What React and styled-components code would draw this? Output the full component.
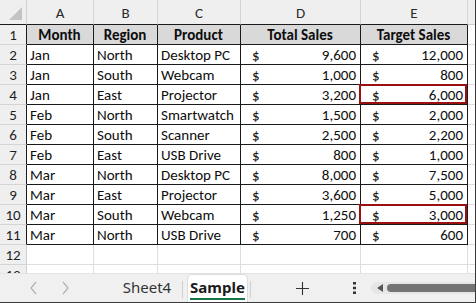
import React from "react";
import styled, { createGlobalStyle } from "styled-components";

const GlobalStyle = createGlobalStyle`
    html, body {
        margin: 0;
        padding: 0;
        background: #ffffff;
    }
    * {
        box-sizing: border-box;
    }
`;

const COLS = [
    { key: "A", width: 67 },
    { key: "B", width: 64 },
    { key: "C", width: 83 },
    { key: "D", width: 120 },
    { key: "E", width: 107 },
];

const rows = [
    ["Jan", "North", "Desktop PC", "9,600", "12,000"],
    ["Jan", "South", "Webcam", "1,000", "800"],
    ["Jan", "East", "Projector", "3,200", "6,000", true],
    ["Feb", "North", "Smartwatch", "1,500", "2,000"],
    ["Feb", "South", "Scanner", "2,500", "2,200"],
    ["Feb", "East", "USB Drive", "800", "1,000"],
    ["Mar", "North", "Desktop PC", "8,000", "7,500"],
    ["Mar", "East", "Projector", "3,600", "5,000"],
    ["Mar", "South", "Webcam", "1,250", "3,000", true],
    ["Mar", "North", "USB Drive", "700", "600"],
];

// --- Estrutura ---
const Window = styled.div`
    width: 476px;
    height: 303px;
    display: flex;
    flex-direction: column;
    overflow: hidden;
    border-right: 1px solid #3a3a3a;
    border-bottom: 1px solid #3a3a3a;
    font-family: Carlito, Lato, "Liberation Sans", sans-serif;
    color: #0d0d0d;
`;

const Sheet = styled.div`
    height: 273px;
    display: grid;
    grid-template-columns: 27px ${COLS.map((c) => c.width + "px").join(" ")} 1fr;
    grid-auto-rows: 20px;
    grid-template-rows: 25px;
    overflow: hidden;
`;

const Corner = styled.div`
    position: relative;
    background: #efefef;
    border-right: 1px solid #cfcfcf;
    border-bottom: 1px solid #1a1a1a;

    &::after {
        content: "";
        position: absolute;
        right: 4px;
        bottom: 4px;
        width: 0;
        height: 0;
        border-left: 13px solid transparent;
        border-bottom: 13px solid #c4c4c4;
    }
`;

const ColHead = styled.div`
    background: #efefef;
    border-right: 1px solid ${({ $edge }) => ($edge ? "#b8b8b8" : "#d4d4d4")};
    border-bottom: 1px solid ${({ $dark }) => ($dark ? "#1a1a1a" : "#cfcfcf")};
    display: flex;
    align-items: center;
    justify-content: center;
    font-size: 15px;
    color: #2b2b2b;
    padding-top: 1px;
`;

const RowHead = styled.div`
    background: #efefef;
    border-right: 1px solid ${({ $dark }) => ($dark ? "#1a1a1a" : "#cfcfcf")};
    border-bottom: 1px solid #d4d4d4;
    display: flex;
    align-items: center;
    justify-content: center;
    font-size: 15px;
    color: #1f1f1f;
    padding-top: 1px;
`;

const Cell = styled.div`
    position: relative;
    background: ${({ $head }) => ($head ? "#d9d9d9" : "#fff")};
    border-right: 1px solid ${({ $dark }) => ($dark ? "#1a1a1a" : "#dedede")};
    border-bottom: 1px solid ${({ $dark }) => ($dark ? "#1a1a1a" : "#dedede")};
    display: flex;
    align-items: center;
    justify-content: ${({ $center }) => ($center ? "center" : "space-between")};
    padding: 1px 4px 0 3px;
    font-size: 15px;
    font-weight: ${({ $head }) => ($head ? 800 : 400)};
    white-space: nowrap;
    overflow: visible;
`;

const Money = styled(Cell)`
    padding-left: 11px;
`;

const Highlight = styled.div`
    position: absolute;
    left: -2px;
    top: -1px;
    right: 0;
    bottom: 0;
    border: 2px solid #9b1010;
    pointer-events: none;
`;

const TabBar = styled.div`
    flex: 1;
    display: flex;
    align-items: stretch;
    background: #f0f0f0;
    border-top: 1px solid #e2e2e2;
    padding-left: 17px;
`;

const NavArrow = styled.div`
    width: 32px;
    display: flex;
    align-items: center;
    justify-content: center;
    color: #b0b0b0;
`;

const Tab = styled.div`
    position: relative;
    display: flex;
    align-items: center;
    justify-content: center;
    width: ${({ $w }) => $w}px;
    padding-left: ${({ $pl }) => $pl || 0}px;
    font-size: 15px;
    font-family: "Segoe UI", "Noto Sans", "Open Sans", sans-serif;
    background: ${({ $active }) => ($active ? "#fff" : "transparent")};
    border-radius: ${({ $active }) => ($active ? "5px 5px 0 0" : "0")};
    border: ${({ $active }) => ($active ? "1px solid #dcdcdc" : "none")};
    border-bottom: none;
    font-weight: ${({ $active }) => ($active ? 700 : 400)};
    color: ${({ $active }) => ($active ? "#1b1b1b" : "#333")};
    padding-bottom: 2px;
`;

const TabLabel = styled.span`
    position: relative;
    padding-bottom: 1px;
    border-bottom: ${({ $active }) => ($active ? "2px solid #157347" : "2px solid transparent")};
    margin-top: 2px;
`;

const Divider = styled.div`
    width: 1px;
    margin: 7px 4px 4px 2px;
    background: #cfcfcf;
`;

const IconButton = styled.div`
    width: ${({ $w }) => $w}px;
    display: flex;
    align-items: center;
    justify-content: center;
    color: #333;
`;

const Scroll = styled.div`
    flex: 1;
    display: flex;
    align-items: center;
    gap: 4px;
    margin: 8px 0 8px 12px;
    padding-left: 6px;
    background: #e6e6e6;
    border-radius: 6px 0 0 6px;
`;

const Thumb = styled.div`
    flex: 1;
    height: 8px;
    background: #737373;
    border-radius: 4px 0 0 4px;
`;

const Chevron = ({ dir }) => (
    <svg width="9" height="14" viewBox="0 0 9 14">
        <path
            d={dir === "left" ? "M7 1 L2 7 L7 13" : "M2 1 L7 7 L2 13"}
            fill="none"
            stroke="currentColor"
            strokeWidth="1.2"
        />
    </svg>
);

const App = () => {
    return (
        <>
            <GlobalStyle />
            <Window>
                <Sheet>
                    <Corner />
                    {COLS.map((c) => (
                        <ColHead key={c.key} $dark>
                            {c.key}
                        </ColHead>
                    ))}
                    <ColHead $edge />

                    <RowHead $dark>1</RowHead>
                    <Cell $head $dark $center>Month</Cell>
                    <Cell $head $dark $center>Region</Cell>
                    <Cell $head $dark $center>Product</Cell>
                    <Cell $head $dark $center>Total Sales</Cell>
                    <Cell $head $dark $center>Target Sales</Cell>
                    <Cell />

                    {rows.map((r, i) => (
                        <React.Fragment key={i}>
                            <RowHead $dark>{i + 2}</RowHead>
                            <Cell $dark>{r[0]}</Cell>
                            <Cell $dark>{r[1]}</Cell>
                            <Cell $dark>{r[2]}</Cell>
                            <Money $dark>
                                <span>$</span>
                                <span>{r[3]}</span>
                            </Money>
                            <Money $dark>
                                <span>$</span>
                                <span>{r[4]}</span>
                                {r[5] && <Highlight />}
                            </Money>
                            <Cell />
                        </React.Fragment>
                    ))}

                    {[12, 13].map((n) => (
                        <React.Fragment key={n}>
                            <RowHead>{n}</RowHead>
                            {COLS.map((c) => (
                                <Cell key={c.key} />
                            ))}
                            <Cell />
                        </React.Fragment>
                    ))}
                </Sheet>

                <TabBar>
                    <NavArrow>
                        <Chevron dir="left" />
                    </NavArrow>
                    <NavArrow>
                        <Chevron dir="right" />
                    </NavArrow>
                    <Tab $w={99} $pl={33}>Sheet4</Tab>
                    <Divider />
                    <Tab $w={61} $active>
                        <TabLabel $active>Sample</TabLabel>
                    </Tab>
                    <Divider />
                    <IconButton $w={94}>
                        <svg width="13" height="13" viewBox="0 0 13 13">
                            <path d="M6.5 0 V13 M0 6.5 H13" stroke="#333" strokeWidth="1.1" />
                        </svg>
                    </IconButton>
                    <IconButton $w={10}>
                        <svg width="3" height="12" viewBox="0 0 3 12">
                            <rect x="0" y="0" width="3" height="2.5" fill="#333" />
                            <rect x="0" y="4.75" width="3" height="2.5" fill="#333" />
                            <rect x="0" y="9.5" width="3" height="2.5" fill="#333" />
                        </svg>
                    </IconButton>
                    <Scroll>
                        <svg width="6" height="8" viewBox="0 0 6 8">
                            <path d="M6 0 L0 4 L6 8 Z" fill="#555" />
                        </svg>
                        <Thumb />
                    </Scroll>
                </TabBar>
            </Window>
        </>
    );
};

export default App;
